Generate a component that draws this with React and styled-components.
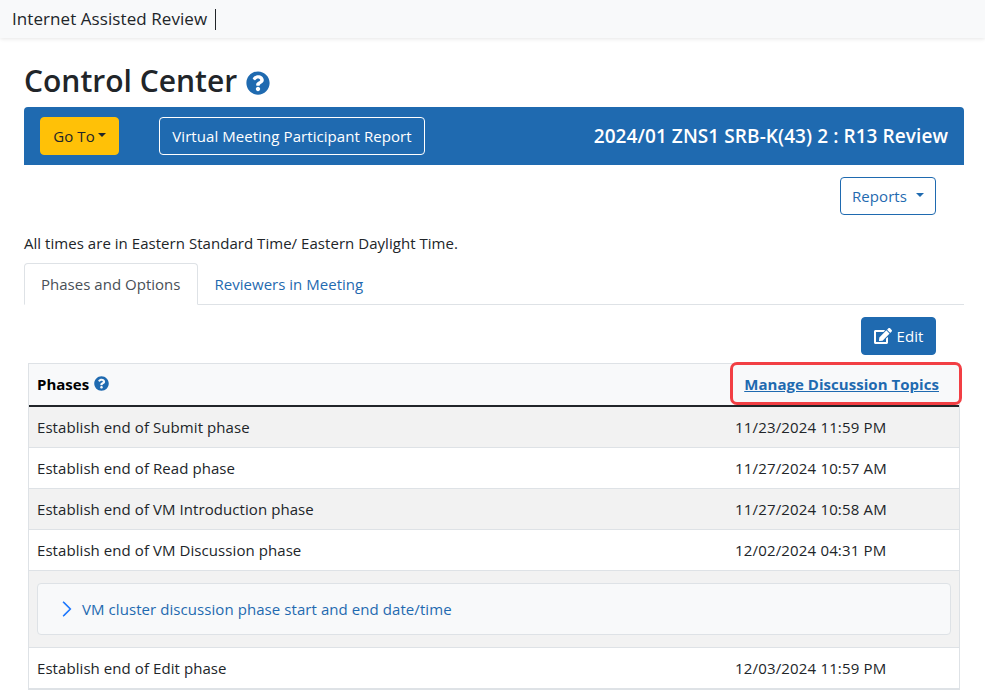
import React from 'react'
import styled, { createGlobalStyle } from 'styled-components'
import { FaQuestionCircle, FaEdit } from 'react-icons/fa'
import { BsChevronRight } from 'react-icons/bs'

const blue = '#1f6ab0'

const GlobalStyle = createGlobalStyle`
  html, body {
    margin: 0;
    padding: 0;
    background: #fff;
  }
  body {
    font-family: "Open Sans", "Noto Sans", "Liberation Sans", sans-serif;
    font-size: 15px;
    line-height: 24px;
    letter-spacing: 0.07px;
    color: #212529;
    height: 698px;
    overflow: hidden;
  }
  * {
    box-sizing: border-box;
  }
`

const NavBar = styled.header`
  height: 38px;
  background: #f8f9fa;
  box-shadow: 0 1px 4px rgba(0, 0, 0, 0.1);
  display: flex;
  align-items: center;
  padding: 0 12px;
`

const Brand = styled.div`
  font-size: 17px;
  color: #212529;
  padding-right: 8px;
  height: 21px;
  line-height: 19px;
  border-right: 1px solid #212529;
`

const Main = styled.main`
  padding: 0 21px 0 24px;
`

const Title = styled.h1`
  margin: 0;
  height: 69px;
  padding-top: 16px;
  font-size: 30px;
  line-height: 38px;
  font-weight: 600;
  letter-spacing: 0;
  display: flex;
  align-items: center;
  gap: 9px;
  color: #212529;

  svg {
    color: ${blue};
    margin-top: 5px;
  }
`

const Banner = styled.section`
  height: 58px;
  background: ${blue};
  border-radius: 4px 4px 0 0;
  display: flex;
  align-items: center;
  padding: 0 16px;
`

const Button = styled.button`
  height: 38px;
  font: inherit;
  letter-spacing: inherit;
  border-radius: 4px;
  display: inline-flex;
  align-items: center;
  justify-content: center;
  padding: 0;
  cursor: pointer;
`

const GoToButton = styled(Button)`
  width: 79px;
  background: #ffc107;
  border: 1px solid #ffc107;
  color: #212529;
  margin-right: 40px;
`

const OutlineLight = styled(Button)`
  width: 266px;
  background: transparent;
  border: 1px solid #fff;
  color: #fff;
`

const BannerTitle = styled.div`
  margin-left: auto;
  font-size: 19px;
  font-weight: 600;
  letter-spacing: 0.08px;
  color: #fff;
`

const Caret = styled.span`
  display: inline-block;
  margin-left: ${(p) => p.$gap}px;
  margin-bottom: 3px;
  border-top: 4.5px solid currentColor;
  border-left: 4.5px solid transparent;
  border-right: 4.5px solid transparent;
`

const ActionRow = styled.div`
  display: flex;
  justify-content: flex-end;
  padding: ${(p) => p.$top}px 28px 0 0;
`

const OutlineBlue = styled(Button)`
  width: 96px;
  background: #fff;
  border: 1px solid ${blue};
  color: ${blue};
`

const Note = styled.p`
  margin: 16px 0 8px;
  height: 24px;
  letter-spacing: 0.04px;
  color: #212529;
`

const Tabs = styled.nav`
  display: flex;
  height: 42px;
  border-bottom: 1px solid #dee2e6;
`

const Tab = styled.div`
  height: 42px;
  padding: 0 16px;
  display: flex;
  align-items: center;
  letter-spacing: 0.02px;
  border: 1px solid ${(p) => (p.$active ? '#dee2e6' : 'transparent')};
  border-bottom: 1px solid ${(p) => (p.$active ? '#fff' : 'transparent')};
  border-radius: 4px 4px 0 0;
  background: ${(p) => (p.$active ? '#fff' : 'transparent')};
  color: ${(p) => (p.$active ? '#495057' : blue)};
`

const EditButton = styled(Button)`
  width: 75px;
  background: ${blue};
  border: 1px solid ${blue};
  color: #fff;
  gap: 5px;
`

const Table = styled.div`
  margin: 8px 4px 0;
  border-left: 1px solid #dee2e6;
  border-right: 1px solid #dee2e6;
  border-bottom: 1px solid #dee2e6;
`

const HeadRow = styled.div`
  position: relative;
  height: 44px;
  display: flex;
  align-items: center;
  background: #f8f9fa;
  border-top: 1px solid #dee2e6;
  border-bottom: 2px solid #212529;
  padding: 0 8px 2px;
`

const HeadLabel = styled.div`
  flex: 1;
  display: flex;
  align-items: center;
  gap: 5px;
  font-weight: 700;
  letter-spacing: 0;
  color: #000;

  svg {
    color: ${blue};
  }
`

const ManageLink = styled.a`
  font-weight: 700;
  letter-spacing: 0.04px;
  color: ${blue};
  text-decoration: underline;
  margin-right: 12px;
`

const Highlight = styled.div`
  position: absolute;
  top: -2px;
  right: -3px;
  width: 232px;
  height: 43px;
  border: 3px solid #f23f44;
  border-radius: 7px;
  pointer-events: none;
`

const Row = styled.div`
  height: 41px;
  display: flex;
  align-items: center;
  padding: 0 8px;
  background: ${(p) => (p.$striped ? '#f2f2f2' : '#fff')};
  border-bottom: 1px solid #dee2e6;
`

const Phase = styled.div`
  flex: 1;
`

const DateCell = styled.div`
  width: 216px;
  letter-spacing: 0.17px;
`

const AccordionRow = styled.div`
  height: 77px;
  padding: 12px 8px;
  background: #f2f2f2;
  border-bottom: 1px solid #dee2e6;
`

const AccordionHead = styled.div`
  height: 52px;
  display: flex;
  align-items: center;
  gap: 6px;
  padding-left: 20px;
  background: #f8f9fa;
  border: 1px solid #dee2e6;
  border-radius: 4px;
  color: ${blue};

  svg {
    color: #0d6efd;
    stroke: currentColor;
    stroke-width: 0.4;
  }
`

const rows = [
  ['Establish end of Submit phase', '11/23/2024 11:59 PM'],
  ['Establish end of Read phase', '11/27/2024 10:57 AM'],
  ['Establish end of VM Introduction phase', '11/27/2024 10:58 AM'],
  ['Establish end of VM Discussion phase', '12/02/2024 04:31 PM'],
]

const App = () => {
  return (
    <>
      <GlobalStyle />
      <NavBar>
        <Brand>Internet Assisted Review</Brand>
      </NavBar>
      <Main>
        <Title>
          Control Center <FaQuestionCircle size={24} />
        </Title>
        <Banner>
          <GoToButton>
            Go To<Caret $gap={3} />
          </GoToButton>
          <OutlineLight>Virtual Meeting Participant Report</OutlineLight>
          <BannerTitle>2024/01 ZNS1 SRB-K(43) 2 : R13 Review</BannerTitle>
        </Banner>
        <ActionRow $top={12}>
          <OutlineBlue>
            Reports<Caret $gap={9} />
          </OutlineBlue>
        </ActionRow>
        <Note>All times are in Eastern Standard Time/ Eastern Daylight Time.</Note>
        <Tabs>
          <Tab $active>Phases and Options</Tab>
          <Tab>Reviewers in Meeting</Tab>
        </Tabs>
        <ActionRow $top={12}>
          <EditButton>
            <FaEdit size={18} /> Edit
          </EditButton>
        </ActionRow>
        <Table>
          <HeadRow>
            <HeadLabel>
              Phases <FaQuestionCircle size={15} />
            </HeadLabel>
            <ManageLink href="#">Manage Discussion Topics</ManageLink>
            <Highlight />
          </HeadRow>
          {rows.map(([name, date], i) => (
            <Row key={name} $striped={i % 2 === 0}>
              <Phase>{name}</Phase>
              <DateCell>{date}</DateCell>
            </Row>
          ))}
          <AccordionRow>
            <AccordionHead>
              <BsChevronRight size={18} />
              VM cluster discussion phase start and end date/time
            </AccordionHead>
          </AccordionRow>
          <Row>
            <Phase>Establish end of Edit phase</Phase>
            <DateCell>12/03/2024 11:59 PM</DateCell>
          </Row>
        </Table>
      </Main>
    </>
  )
}

export default App
